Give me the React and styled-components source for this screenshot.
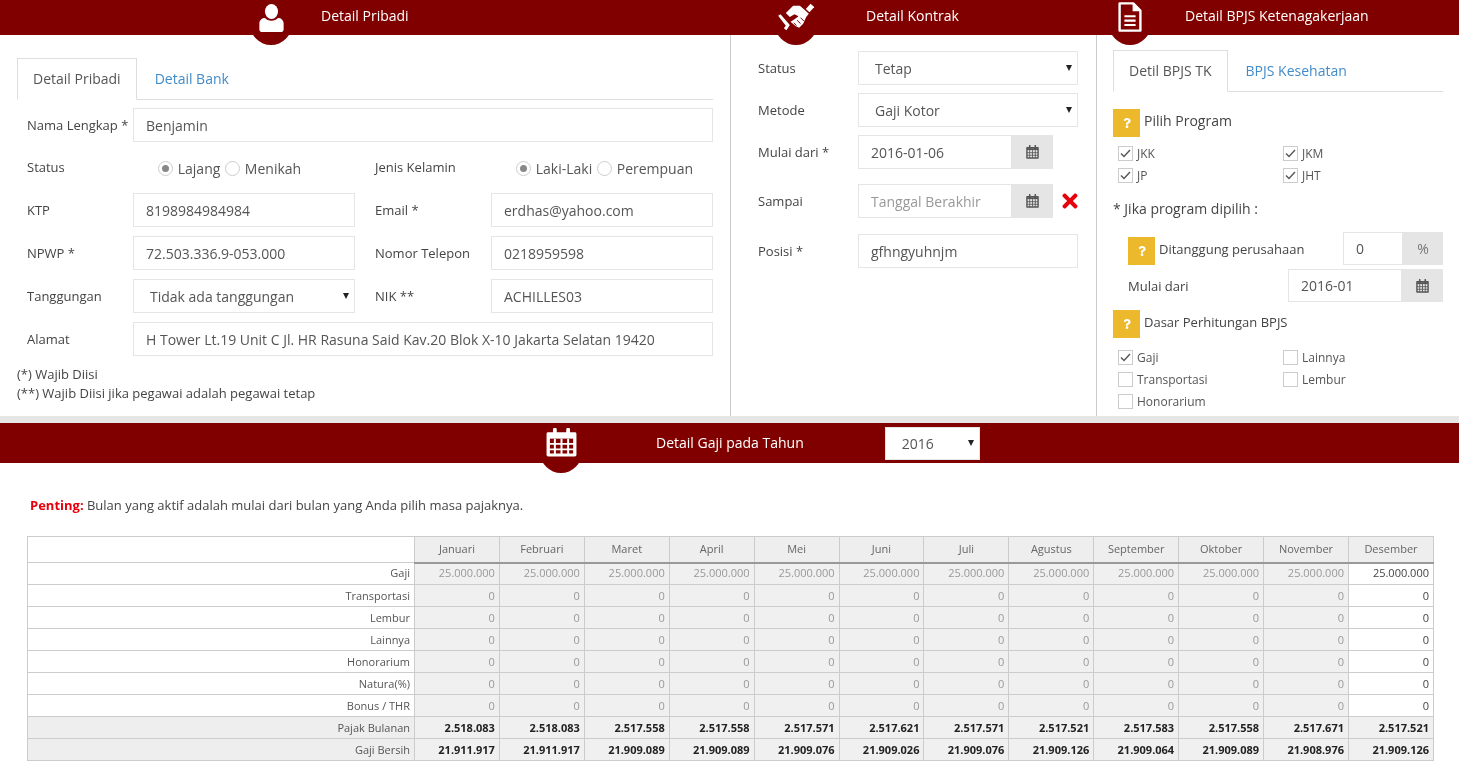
import React from "react"
import styled, { createGlobalStyle } from "styled-components"
import { FaQuestion, FaTimes } from "react-icons/fa"

const GlobalStyle = createGlobalStyle`
    html, body {
        margin: 0;
        padding: 0;
        background: white;
        overflow: hidden;
    }
    body, input, select, table {
        font-family: "Open Sans", "Liberation Sans", sans-serif;
        color: #444;
    }
    #root {
        will-change: transform;
    }
    * {
        box-sizing: border-box;
    }
`

const TopRow = styled.div`
    display: grid;
    grid-template-columns: 731px 366px 362px;
    height: 416px;
`

const Panel = styled.section`
    height: 416px;
`

const PanelBody = styled.div`
    height: 381px;
    overflow: hidden;
    border-right: ${(p) => (p.$line ? "1px solid #ccc" : "none")};
`

const Bar = styled.div`
    display: flex;
    align-items: flex-start;
    height: ${(p) => p.$height || 35}px;
    padding-left: ${(p) => p.$left}px;
    background: #800000;
`

const Badge = styled.div`
    position: relative;
    z-index: 1;
    flex: none;
    display: flex;
    align-items: flex-start;
    justify-content: center;
    width: 42px;
    height: 42px;
    margin-top: ${(p) => p.$top || 3}px;
    border-radius: 50%;
    background: #800000;
    color: white;
    svg {
        flex: none;
        margin-top: ${(p) => p.$iconTop}px;
    }
`

const BarTitle = styled.div`
    margin-left: ${(p) => p.$gap}px;
    margin-top: ${(p) => p.$top || 6}px;
    font-size: 14px;
    line-height: 20px;
    font-weight: 400;
    color: white;
    white-space: nowrap;
`

const Tabs = styled.div`
    display: flex;
    gap: 2px;
    height: 42px;
    margin: ${(p) => p.$margin};
    border-bottom: 1px solid #ddd;
`

const Tab = styled.div`
    height: 42px;
    padding: 10px 15px 0;
    font-size: 14px;
    line-height: 20px;
    color: ${(p) => (p.$active ? "#555" : "#428bca")};
    background: ${(p) => (p.$active ? "white" : "transparent")};
    border: 1px solid ${(p) => (p.$active ? "#ddd" : "transparent")};
    border-bottom-color: ${(p) => (p.$active ? "white" : "transparent")};
`

const Field = styled.input`
    display: block;
    width: ${(p) => p.$width || "100%"};
    height: ${(p) => p.$height || 34}px;
    padding: 0 12px;
    font-size: 14px;
    color: #555;
    background: white;
    border: 1px solid #e5e5e5;
    outline: none;
    &::placeholder {
        color: #999;
    }
`

const SelectBox = styled.div`
    position: relative;
    width: ${(p) => p.$width || "100%"};
    &::after {
        content: "";
        position: absolute;
        right: 6px;
        top: ${(p) => p.$arrow || 14}px;
        border-left: 3.5px solid transparent;
        border-right: 3.5px solid transparent;
        border-top: 6px solid #222;
    }
`

const Select = styled.select`
    display: block;
    width: 100%;
    height: ${(p) => p.$height || 34}px;
    padding: 0 12px 0 16px;
    font-size: 14px;
    color: #555;
    background: white;
    border: 1px solid #e5e5e5;
    border-radius: 0;
    appearance: none;
    outline: none;
`

const Label = styled.div`
    font-size: 13px;
    line-height: 18px;
    color: #444;
    white-space: nowrap;
`

const StatusLabel = styled(Label)`
    padding-bottom: 2px;
`

const PersonalForm = styled.div`
    display: grid;
    grid-template-columns: 106px 222px 20px 116px 222px;
    grid-template-rows: 34px 33px repeat(4, 34px);
    row-gap: 9px;
    align-items: center;
    margin: 8px 17px 0 27px;
`

const Wide = styled.div`
    grid-column: 2 / 6;
`

const Gap = styled.div`
    width: 20px;
`

const RadioGroup = styled.div`
    display: flex;
    align-items: center;
    gap: 4.75px;
    padding-top: 1px;
    padding-left: ${(p) => p.$left}px;
    font-size: 14px;
    color: #555;
    white-space: nowrap;
`

const Radio = styled.span`
    display: inline-block;
    position: relative;
    flex: none;
    width: 15px;
    height: 15px;
    border: 1px solid #ccc;
    border-radius: 50%;
    background: white;
    &::after {
        content: "";
        display: ${(p) => (p.$on ? "block" : "none")};
        position: absolute;
        left: 3px;
        top: 3px;
        width: 7px;
        height: 7px;
        border-radius: 50%;
        background: #888;
    }
`

const Notes = styled.div`
    margin: 9px 0 0 17px;
    font-size: 13px;
    line-height: 19px;
`

const ContractForm = styled.div`
    display: flex;
    flex-direction: column;
    padding: 16px 0 0 27px;
`

const ContractRow = styled.div`
    display: flex;
    align-items: center;
    margin-bottom: ${(p) => p.$below}px;
`

const ContractLabel = styled(Label)`
    width: 100px;
`

const InputGroup = styled.div`
    display: flex;
    flex: none;
    width: ${(p) => p.$width}px;
`

const AddOn = styled.div`
    display: flex;
    align-items: center;
    justify-content: center;
    flex: none;
    width: ${(p) => p.$width || 41}px;
    height: ${(p) => p.$height || 34}px;
    font-size: 14px;
    color: #777;
    background: #e5e5e5;
`

const Remove = styled.div`
    display: flex;
    margin-left: 6px;
    color: #e8000d;
    font-size: 22px;
`

const BpjsBody = styled.div`
    padding: 0 16px;
`

const HintRow = styled.div`
    display: flex;
    align-items: flex-start;
    height: 28px;
    margin: ${(p) => p.$margin || 0};
`

const Hint = styled.div`
    display: flex;
    align-items: center;
    justify-content: center;
    flex: none;
    width: 27px;
    height: 28px;
    margin-right: 4px;
    background: #ecb92c;
    color: white;
    font-size: 10px;
`

const CoverHint = styled(Hint)`
    margin-top: 5px;
`

const HintText = styled.div`
    font-size: ${(p) => p.$size || 14}px;
    line-height: 24px;
    color: #444;
    white-space: nowrap;
`

const CheckGrid = styled.div`
    display: grid;
    grid-template-columns: 165px 1fr;
    grid-auto-rows: 22px;
    align-items: center;
    margin: ${(p) => p.$margin};
    padding-left: 5px;
`

const CheckItem = styled.div`
    display: flex;
    align-items: center;
    gap: 4px;
    font-size: 12px;
    color: #555;
`

const CheckBox = styled.span`
    display: flex;
    align-items: center;
    justify-content: center;
    width: 15px;
    height: 15px;
    border: 1px solid #ccc;
    background: white;
`

const SubNote = styled.div`
    margin-top: 13px;
    font-size: 14px;
    line-height: 20px;
`

const CoverRow = styled.div`
    display: flex;
    align-items: flex-start;
    height: 33px;
    margin: ${(p) => p.$margin};
    padding-left: 15px;
`

const CoverText = styled(HintText)`
    flex: 1;
    font-size: 13px;
    line-height: 34px;
`

const Divider = styled.div`
    height: 7px;
    background: #e6e6e6;
`

const YearSelect = styled(SelectBox)`
    flex: none;
    margin: 4px 0 0 81px;
`

const Important = styled.p`
    margin: 34px 0 0 30px;
    font-size: 13px;
    line-height: 16px;
    color: #444;
    strong {
        color: #e8000d;
        font-weight: 700;
    }
`

const Sheet = styled.table`
    width: 1407px;
    margin: 23px 0 0 27px;
    border-collapse: collapse;
    table-layout: fixed;
    font-size: 11px;
`

const HeadCell = styled.th`
    height: 26px;
    padding: 0 0 2px;
    font-weight: 400;
    color: #666;
    background: #eee;
    border: 1px solid #ccc;
    border-bottom: 2px solid #999;
    text-align: center;
`

const CornerCell = styled(HeadCell)`
    width: 387px;
    background: white;
    border-bottom-color: #ccc;
    border-bottom-width: 1px;
`

const RowLabel = styled.td`
    height: 22px;
    padding: 0 4px ${(p) => (p.$first ? 2 : 0)}px 0;
    text-align: right;
    color: #555;
    background: ${(p) => (p.$total ? "#eee" : "white")};
    border: 1px solid #ccc;
`

const Cell = styled.td`
    padding: 0 4px ${(p) => (p.$first ? 2 : 0)}px 0;
    text-align: right;
    font-weight: ${(p) => (p.$total ? 700 : 400)};
    color: ${(p) => (p.$total ? "#222" : p.$open ? "#444" : "#999")};
    background: ${(p) => (p.$open ? "white" : "#f0f0f0")};
    border: 1px solid #ccc;
`

const UserIcon = () => (
    <svg width="27" height="28" viewBox="0 0 28 30" fill="white">
        <ellipse cx="14" cy="8" rx="7" ry="8" />
        <path d="M4 30c-2 0-3-1-3-3v-6c0-4 3-6 6-6 2 2 4 3 7 3s5-1 7-3c3 0 6 2 6 6v6c0 2-1 3-3 3z" />
    </svg>
)

const DealIcon = () => (
    <svg width="36" height="29" viewBox="25 10 107 87" fill="white">
        <path d="M108 28L122 12l11 10-14 16z" />
        <path d="M48 40L70 18h20l14 12 13 12-8 10-9 20-12 12-10-4-16-14 10-6 14-10-12-6-14 8z" />
        <path d="M25 48l7-4 28 32-10 16-8-6 6-8z" />
        <path d="M82 62l10 10M92 54l10 10M72 70l8 8" stroke="#800000" strokeWidth="3" fill="none" />
    </svg>
)

const FileIcon = () => (
    <svg width="24" height="32" viewBox="0 0 30 38" fill="none" stroke="white" strokeWidth="3">
        <path d="M2 2h17l9 9v25H2z" strokeLinejoin="round" />
        <path d="M19 2v9h9" fill="white" strokeWidth="1.5" />
        <path d="M8 18h14M8 23.5h14M8 29h14" strokeWidth="2.6" />
    </svg>
)

const CalendarIcon = ({ width = 13, height = 14, color = "#555" }) => (
    <svg width={width} height={height} viewBox="0 0 28 30" fill="none" preserveAspectRatio="none">
        <path d="M2 6h24v22H2z" stroke={color} strokeWidth="3" strokeLinejoin="round" />
        <path d="M2 7h24v4H2z" fill={color} />
        <path d="M2 16.5h24M2 22h24M8 11v17M14 11v17M20 11v17" stroke={color} strokeWidth="1.8" />
        <path d="M8 1.5v6M20 1.5v6" stroke={color} strokeWidth="3.4" strokeLinecap="round" />
    </svg>
)

const Check = () => (
    <svg width="11" height="9" viewBox="0 0 11 9" fill="none" stroke="#555" strokeWidth="1.4">
        <path d="M1 4.5l3 3 6-6.5" />
    </svg>
)

const CheckOption = ({ label, on }) => (
    <CheckItem>
        <CheckBox>{on && <Check />}</CheckBox>
        {label}
    </CheckItem>
)

const months = ["Januari", "Februari", "Maret", "April", "Mei", "Juni", "Juli", "Agustus", "September", "Oktober", "November", "Desember"]
const plainRows = ["Transportasi", "Lembur", "Lainnya", "Honorarium", "Natura(%)", "Bonus / THR"]
const tax = ["2.518.083", "2.518.083", "2.517.558", "2.517.558", "2.517.571", "2.517.621", "2.517.571", "2.517.521", "2.517.583", "2.517.558", "2.517.671", "2.517.521"]
const net = ["21.911.917", "21.911.917", "21.909.089", "21.909.089", "21.909.076", "21.909.026", "21.909.076", "21.909.126", "21.909.064", "21.909.089", "21.908.976", "21.909.126"]

const App = () => {
    return (
        <>
            <GlobalStyle />
            <TopRow>
                <Panel>
                    <Bar $left={250}>
                        <Badge $iconTop={1}><UserIcon /></Badge>
                        <BarTitle $gap={29}>Detail Pribadi</BarTitle>
                    </Bar>
                    <PanelBody $line>
                        <Tabs $margin="23px 17px 0 17px">
                            <Tab $active>Detail Pribadi</Tab>
                            <Tab>Detail Bank</Tab>
                        </Tabs>
                        <PersonalForm>
                            <Label>Nama Lengkap *</Label>
                            <Wide><Field readOnly value="Benjamin" /></Wide>

                            <StatusLabel>Status</StatusLabel>
                            <RadioGroup $left={25}>
                                <Radio $on />Lajang<Radio />Menikah
                            </RadioGroup>
                            <Gap />
                            <StatusLabel>Jenis Kelamin</StatusLabel>
                            <RadioGroup $left={25}>
                                <Radio $on />Laki-Laki<Radio />Perempuan
                            </RadioGroup>

                            <Label>KTP</Label>
                            <Field readOnly value="8198984984984" />
                            <Gap />
                            <Label>Email *</Label>
                            <Field readOnly value="erdhas@yahoo.com" />

                            <Label>NPWP *</Label>
                            <Field readOnly value="72.503.336.9-053.000" />
                            <Gap />
                            <Label>Nomor Telepon</Label>
                            <Field readOnly value="0218959598" />

                            <Label>Tanggungan</Label>
                            <SelectBox>
                                <Select defaultValue="none">
                                    <option value="none">Tidak ada tanggungan</option>
                                </Select>
                            </SelectBox>
                            <Gap />
                            <Label>NIK **</Label>
                            <Field readOnly value="ACHILLES03" />

                            <Label>Alamat</Label>
                            <Wide><Field readOnly value="H Tower Lt.19 Unit C Jl. HR Rasuna Said Kav.20 Blok X-10 Jakarta Selatan 19420" /></Wide>
                        </PersonalForm>
                        <Notes>
                            <div>(*) Wajib Diisi</div>
                            <div>(**) Wajib Diisi jika pegawai adalah pegawai tetap</div>
                        </Notes>
                    </PanelBody>
                </Panel>

                <Panel>
                    <Bar $left={44}>
                        <Badge $iconTop={0}><DealIcon /></Badge>
                        <BarTitle $gap={49}>Detail Kontrak</BarTitle>
                    </Bar>
                    <PanelBody $line>
                        <ContractForm>
                            <ContractRow $below={8}>
                                <ContractLabel>Status</ContractLabel>
                                <SelectBox $width="220px"><Select defaultValue="a"><option value="a">Tetap</option></Select></SelectBox>
                            </ContractRow>
                            <ContractRow $below={8}>
                                <ContractLabel>Metode</ContractLabel>
                                <SelectBox $width="220px"><Select defaultValue="a"><option value="a">Gaji Kotor</option></Select></SelectBox>
                            </ContractRow>
                            <ContractRow $below={15}>
                                <ContractLabel>Mulai dari *</ContractLabel>
                                <InputGroup $width={195}>
                                    <Field readOnly value="2016-01-06" />
                                    <AddOn><CalendarIcon /></AddOn>
                                </InputGroup>
                            </ContractRow>
                            <ContractRow $below={16}>
                                <ContractLabel>Sampai</ContractLabel>
                                <InputGroup $width={195}>
                                    <Field readOnly placeholder="Tanggal Berakhir" />
                                    <AddOn><CalendarIcon /></AddOn>
                                </InputGroup>
                                <Remove><FaTimes /></Remove>
                            </ContractRow>
                            <ContractRow $below={0}>
                                <ContractLabel>Posisi *</ContractLabel>
                                <InputGroup $width={220}>
                                    <Field readOnly value="gfhngyuhnjm" />
                                </InputGroup>
                            </ContractRow>
                        </ContractForm>
                    </PanelBody>
                </Panel>

                <Panel>
                    <Bar $left={12}>
                        <Badge $iconTop={-2}><FileIcon /></Badge>
                        <BarTitle $gap={34}>Detail BPJS Ketenagakerjaan</BarTitle>
                    </Bar>
                    <PanelBody>
                        <BpjsBody>
                            <Tabs $margin="15px 0 0 0">
                                <Tab $active>Detil BPJS TK</Tab>
                                <Tab>BPJS Kesehatan</Tab>
                            </Tabs>
                            <HintRow $margin="17px 0 0 0">
                                <Hint><FaQuestion /></Hint>
                                <HintText>Pilih Program</HintText>
                            </HintRow>
                            <CheckGrid $margin="5px 0 0 0">
                                <CheckOption label="JKK" on />
                                <CheckOption label="JKM" on />
                                <CheckOption label="JP" on />
                                <CheckOption label="JHT" on />
                            </CheckGrid>
                            <SubNote>* Jika program dipilih :</SubNote>
                            <CoverRow $margin="13px 0 0 0">
                                <CoverHint><FaQuestion /></CoverHint>
                                <CoverText>Ditanggung perusahaan</CoverText>
                                <InputGroup $width={100}>
                                    <Field readOnly $height={33} value="0" />
                                    <AddOn $width={40} $height={33}>%</AddOn>
                                </InputGroup>
                            </CoverRow>
                            <CoverRow $margin="4px 0 0 0">
                                <CoverText>Mulai dari</CoverText>
                                <InputGroup $width={155}>
                                    <Field readOnly $height={33} value="2016-01" />
                                    <AddOn $height={33}><CalendarIcon /></AddOn>
                                </InputGroup>
                            </CoverRow>
                            <HintRow $margin="8px 0 0 0">
                                <Hint><FaQuestion /></Hint>
                                <HintText $size={13}>Dasar Perhitungan BPJS</HintText>
                            </HintRow>
                            <CheckGrid $margin="8px 0 0 0">
                                <CheckOption label="Gaji" on />
                                <CheckOption label="Lainnya" />
                                <CheckOption label="Transportasi" />
                                <CheckOption label="Lembur" />
                                <CheckOption label="Honorarium" />
                            </CheckGrid>
                        </BpjsBody>
                    </PanelBody>
                </Panel>
            </TopRow>

            <Divider />

            <Bar $left={540} $height={40}>
                <Badge $top={8} $iconTop={-3}><CalendarIcon width={31} height={29} color="white" /></Badge>
                <BarTitle $gap={74} $top={10}>Detail Gaji pada Tahun</BarTitle>
                <YearSelect $width="95px" $arrow={13}>
                    <Select $height={33} defaultValue="2016"><option value="2016">2016</option></Select>
                </YearSelect>
            </Bar>

            <Important><strong>Penting:</strong> Bulan yang aktif adalah mulai dari bulan yang Anda pilih masa pajaknya.</Important>

            <Sheet>
                <thead>
                    <tr>
                        <CornerCell />
                        {months.map((m) => <HeadCell key={m}>{m}</HeadCell>)}
                    </tr>
                </thead>
                <tbody>
                    <tr>
                        <RowLabel $first>Gaji</RowLabel>
                        {months.map((m, i) => <Cell key={m} $first $open={i === 11}>25.000.000</Cell>)}
                    </tr>
                    {plainRows.map((row) => (
                        <tr key={row}>
                            <RowLabel>{row}</RowLabel>
                            {months.map((m, i) => <Cell key={m} $open={i === 11}>0</Cell>)}
                        </tr>
                    ))}
                    <tr>
                        <RowLabel $total>Pajak Bulanan</RowLabel>
                        {tax.map((v, i) => <Cell key={i} $total>{v}</Cell>)}
                    </tr>
                    <tr>
                        <RowLabel $total>Gaji Bersih</RowLabel>
                        {net.map((v, i) => <Cell key={i} $total>{v}</Cell>)}
                    </tr>
                </tbody>
            </Sheet>
        </>
    )
}

export default App
